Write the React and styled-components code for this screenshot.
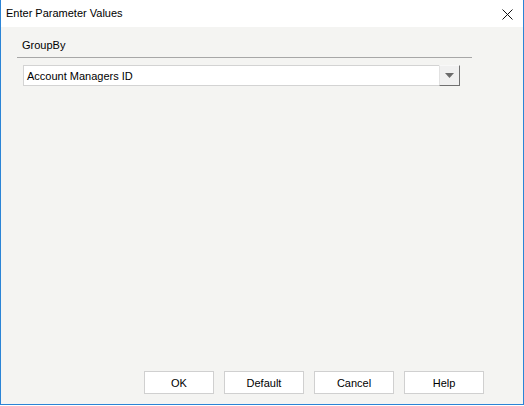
import styled, { createGlobalStyle } from "styled-components";

const GlobalStyle = createGlobalStyle`
  html, body {
    margin: 0;
    padding: 0;
    background: #ffffff;
  }
  body {
    font-family: "Liberation Sans", Arial, sans-serif;
    font-size: 11px;
    color: #000;
  }
`;

const Window = styled.div`
  width: 524px;
  height: 405px;
  box-sizing: border-box;
  border: 1px solid #2b84d6;
  border-top: none;
  display: flex;
  flex-direction: column;
  background: #f4f4f2;
`;

const TitleBar = styled.div`
  height: 27px;
  flex: none;
  background: #ffffff;
  display: flex;
  align-items: center;
  justify-content: space-between;
  padding: 0 10px 0 5px;
`;

const Title = styled.div`
  font-size: 11px;
  padding-bottom: 1px;
`;

const CloseButton = styled.div`
  width: 12px;
  height: 12px;
  display: flex;
  align-items: center;
  justify-content: center;
  margin-top: 1px;
`;

const Body = styled.div`
  flex: 1;
  display: flex;
  flex-direction: column;
  padding: 12px 0 10px 16px;
`;

const GroupLabel = styled.div`
  width: 455px;
  box-sizing: border-box;
  padding: 0 0 5px 5px;
  border-bottom: 1px solid #a7a7a7;
  line-height: 13px;
`;

const Combo = styled.div`
  margin: 7px 0 0 6px;
  width: 437px;
  height: 21px;
  box-sizing: border-box;
  background: #ffffff;
  border: 1px solid #d3d3d3;
  display: flex;
  align-items: stretch;
`;

const ComboText = styled.div`
  flex: 1;
  padding-left: 3px;
  display: flex;
  align-items: center;
`;

const ComboArrow = styled.div`
  width: 21px;
  box-sizing: border-box;
  margin: -1px -1px -1px 0;
  background: #f0f0f0;
  border-top: 1px solid #f8f8f8;
  border-left: 1px solid #e2e2e2;
  border-right: 1px solid #707070;
  border-bottom: 1px solid #707070;
  display: flex;
  align-items: center;
  justify-content: center;
`;

const Spacer = styled.div`
  flex: 1;
`;

const ButtonRow = styled.div`
  display: flex;
  gap: 10px;
  padding-left: 127px;
`;

const Button = styled.div`
  width: ${(p) => p.$w}px;
  height: 23px;
  box-sizing: border-box;
  background: #ffffff;
  border: 1px solid #d0d0d0;
  display: flex;
  align-items: center;
  justify-content: center;
  font-size: 11px;
`;

export default function App() {
  return (
    <>
      <GlobalStyle />
      <Window>
        <TitleBar>
          <Title>Enter Parameter Values</Title>
          <CloseButton>
            <svg width="11" height="11" viewBox="0 0 11 11">
              <path d="M0.5 0.5 L10.5 10.5 M10.5 0.5 L0.5 10.5" stroke="#111" strokeWidth="1" fill="none" />
            </svg>
          </CloseButton>
        </TitleBar>
        <Body>
          <GroupLabel>GroupBy</GroupLabel>
          <Combo>
            <ComboText>Account Managers ID</ComboText>
            <ComboArrow>
              <svg width="9" height="5" viewBox="0 0 9 5">
                <path d="M0 0 H9 L4.5 5 Z" fill="#6b6b6b" />
              </svg>
            </ComboArrow>
          </Combo>
          <Spacer />
          <ButtonRow>
            <Button $w={70}>OK</Button>
            <Button $w={80}>Default</Button>
            <Button $w={80}>Cancel</Button>
            <Button $w={80}>Help</Button>
          </ButtonRow>
        </Body>
      </Window>
    </>
  );
}
